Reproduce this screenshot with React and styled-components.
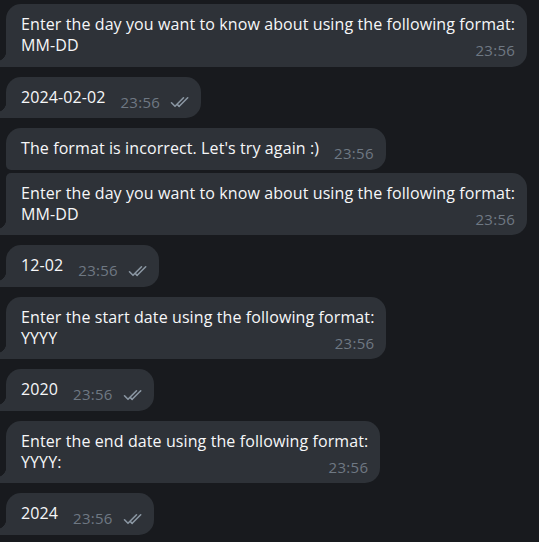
import styled, { createGlobalStyle } from 'styled-components'

const GlobalStyle = createGlobalStyle`
  html, body {
    margin: 0;
    padding: 0;
    background: #181a1e;
  }
  body {
    font-family: "Open Sans", "Noto Sans", sans-serif;
    -webkit-font-smoothing: antialiased;
  }
`;

const BUBBLE = '#2e3238';

const Chat = styled.div`
  display: flex;
  flex-direction: column;
  align-items: flex-start;
  gap: 10px;
  padding: 4px 0 0 6px;
  width: 539px;
  height: 542px;
  box-sizing: border-box;
  overflow: hidden;
`;

const Group = styled.div`
  display: flex;
  flex-direction: column;
  align-items: flex-start;
  gap: 3px;
`;

const Bubble = styled.div`
  position: relative;
  display: flow-root;
  background: ${BUBBLE};
  color: #f6f7f8;
  font-size: 16px;
  letter-spacing: 0.1px;
  line-height: 21px;
  padding: 10px 12px 10.5px 15px;
  white-space: pre-line;
  border-radius: ${p => p.$first ? '15px 15px 15px 5px' : p.$cont ? '5px 15px 15px 0' : '15px 15px 15px 0'};

  &::before {
    content: '';
    display: ${p => p.$first ? 'none' : 'block'};
    position: absolute;
    left: -10px;
    bottom: 0;
    width: 10px;
    height: 16px;
    background: radial-gradient(circle at 0 0, transparent 10px, ${BUBBLE} 10.6px);
  }
`;

const Meta = styled.span`
  float: right;
  position: relative;
  top: 5px;
  display: inline-flex;
  align-items: center;
  margin-left: 15px;
  color: #6e7883;
  font-size: 15px;
  letter-spacing: 0.3px;
  line-height: 21px;
`;

const Checks = styled.svg`
  width: 22px;
  height: 12px;
  margin-left: 10px;
  margin-right: -3px;
`;

function DoubleCheck() {
  return (
    <Checks viewBox="0 0 22 12" fill="none" stroke="#8a96a2" strokeWidth="1.6" strokeLinecap="round" strokeLinejoin="round">
      <path d="M1.5 6.8 L5 10.3 L13.5 1.8" />
      <path d="M9.2 10.3 L17.7 1.8" />
      <path d="M7.4 8.6 L9.2 10.3" />
    </Checks>
  );
}

function Message({ text, out, first, cont }) {
  return (
    <Bubble $first={first} $cont={cont}>
      {text}
      <Meta>
        23:56
        {out && <DoubleCheck />}
      </Meta>
    </Bubble>
  );
}

export default function App() {
  return (
    <>
      <GlobalStyle />
      <Chat>
        <Message text={'Enter the day you want to know about using the following format:\nMM-DD'} />
        <Message text="2024-02-02" out />
        <Group>
          <Message text="The format is incorrect. Let's try again :)" first />
          <Message text={'Enter the day you want to know about using the following format:\nMM-DD'} cont />
        </Group>
        <Message text="12-02" out />
        <Message text={'Enter the start date using the following format:\nYYYY'} />
        <Message text="2020" out />
        <Message text={'Enter the end date using the following format:\nYYYY:'} />
        <Message text="2024" out />
      </Chat>
    </>
  );
}
